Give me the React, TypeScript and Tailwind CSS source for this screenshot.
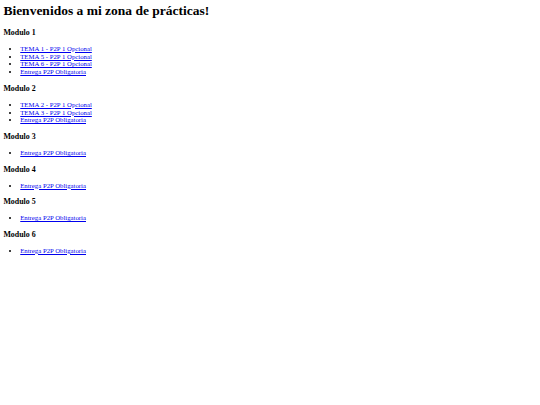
const modulos = [
  {
    title: "Modulo 1",
    items: ["TEMA 1 - P2P 1 Opcional", "TEMA 5 - P2P 1 Opcional", "TEMA 6 - P2P 1 Opcional", "Entrega P2P Obligatoria"],
  },
  {
    title: "Modulo 2",
    items: ["TEMA 2 - P2P 1 Opcional", "TEMA 3 - P2P 1 Opcional", "Entrega P2P Obligatoria"],
  },
  { title: "Modulo 3", items: ["Entrega P2P Obligatoria"] },
  { title: "Modulo 4", items: ["Entrega P2P Obligatoria"] },
  { title: "Modulo 5", items: ["Entrega P2P Obligatoria"] },
  { title: "Modulo 6", items: ["Entrega P2P Obligatoria"] },
]

export default function App() {
  return (
    <div className="min-h-[405px] bg-white p-[3.375px] text-black font-['Liberation_Serif',serif]">
      <h1 className="mt-0 mb-[9.05px] text-[13.5px] leading-[15.5px] font-bold">Bienvenidos a mi zona de prácticas!</h1>

      {modulos.map((m) => (
        <div key={m.title}>
          <h3 className="my-[7.9px] text-[7.9px] leading-[9.1px] font-bold">{m.title}</h3>
          <ul className="my-[6.75px] list-disc pl-[16.875px] text-[6.75px] leading-[7.77px]">
            {m.items.map((item, i) => (
              <li key={i}>
                <a href="#" className="text-[#0000ee] underline">
                  {item}
                </a>
              </li>
            ))}
          </ul>
        </div>
      ))}
    </div>
  )
}
